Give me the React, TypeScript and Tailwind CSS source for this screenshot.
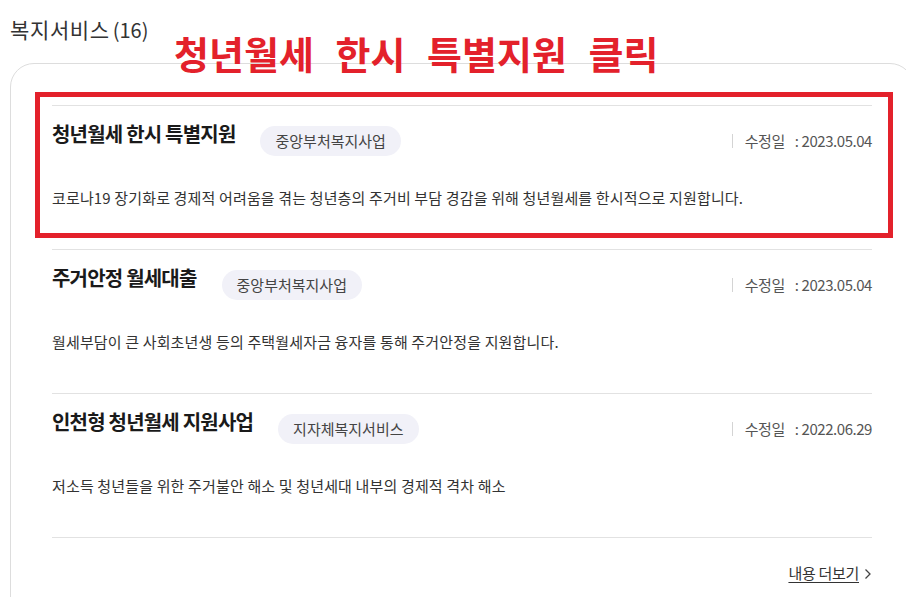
interface Service {
  id: number;
  title: string;
  category: string;
  updated: string;
  summary: string;
}

const SERVICES: Service[] = [
  {
    id: 1,
    title: '청년월세 한시 특별지원',
    category: '중앙부처복지사업',
    updated: '2023.05.04',
    summary: '코로나19 장기화로 경제적 어려움을 겪는 청년층의 주거비 부담 경감을 위해 청년월세를 한시적으로 지원합니다.',
  },
  {
    id: 2,
    title: '주거안정 월세대출',
    category: '중앙부처복지사업',
    updated: '2023.05.04',
    summary: '월세부담이 큰 사회초년생 등의 주택월세자금 융자를 통해 주거안정을 지원합니다.',
  },
  {
    id: 3,
    title: '인천형 청년월세 지원사업',
    category: '지자체복지서비스',
    updated: '2022.06.29',
    summary: '저소득 청년들을 위한 주거불안 해소 및 청년세대 내부의 경제적 격차 해소',
  },
];

function ServiceItem({ item }: { item: Service }) {
  return (
    <li className="border-t border-[#e2e2e2] pt-[14px] pb-10">
      <div className="flex items-start">
        <h3 className="text-[20px] leading-[28px] font-bold text-[#1a1a1a] tracking-[-0.04em]">
          {item.title}
        </h3>
        <span className="ml-[25px] mt-[6px] h-[30px] px-[15px] rounded-full bg-[#f1f1f8] text-[15px] leading-[30px] text-[#444]">
          {item.category}
        </span>
        <div className="ml-auto mt-[6px] flex items-center h-[30px] text-[15px] text-[#555] tracking-[-0.03em]">
          <span className="w-px h-[14px] bg-[#d4d4d4] mr-3" />
          <span>수정일</span>
          <span className="ml-[10px] mr-[3px]">:</span>
          <span>{item.updated}</span>
        </div>
      </div>
      <p className="mt-[31px] text-[15px] leading-[22px] text-[#333] tracking-[0.01em]">{item.summary}</p>
    </li>
  );
}

export default function App() {
  return (
    <div
      className="relative w-[906px] h-[597px] overflow-hidden bg-white"
      style={{ fontFamily: "'Noto Sans CJK KR', 'Noto Sans', sans-serif" }}
    >
      {/* Section header */}
      <div className="h-[43px] pt-[15px] pl-[10px] flex items-baseline text-[#333] leading-[28px]">
        <h2 className="text-[21px] leading-[28px] tracking-[0.03em]">복지서비스</h2>
        <span className="ml-[3px] text-[20px] leading-[28px]">(16)</span>
      </div>

      {/* Card */}
      <div className="ml-[10px] mt-[20px] w-[904px] border border-[#dddddd] rounded-[24px] px-[41px] pt-[41px] pb-20">
        <ul className="border-b border-[#e2e2e2]">
          {SERVICES.map((item) => (
            <ServiceItem key={item.id} item={item} />
          ))}
        </ul>
        <div className="mt-[24px] flex justify-end">
          <a className="flex items-center text-[15px] leading-[22px] text-[#333] tracking-[-0.02em]">
            <span className="underline underline-offset-[3px]">내용 더보기</span>
            <svg className="ml-[5px] mt-[1px]" width="8" height="12" viewBox="0 0 8 12" fill="none">
              <path d="M1.5 1.5 6 6l-4.5 4.5" stroke="#444" strokeWidth="1.3" />
            </svg>
          </a>
        </div>
      </div>

      {/* Annotation overlay */}
      <div className="absolute left-[174px] top-[32px] text-[38px] leading-[42px] font-bold text-[#e3212b] [word-spacing:13px]">
        청년월세 한시 특별지원 클릭
      </div>
      <div className="absolute left-[35px] top-[92px] w-[858px] h-[146px] border-[5px] border-[#e3212b] pointer-events-none" />
    </div>
  );
}
